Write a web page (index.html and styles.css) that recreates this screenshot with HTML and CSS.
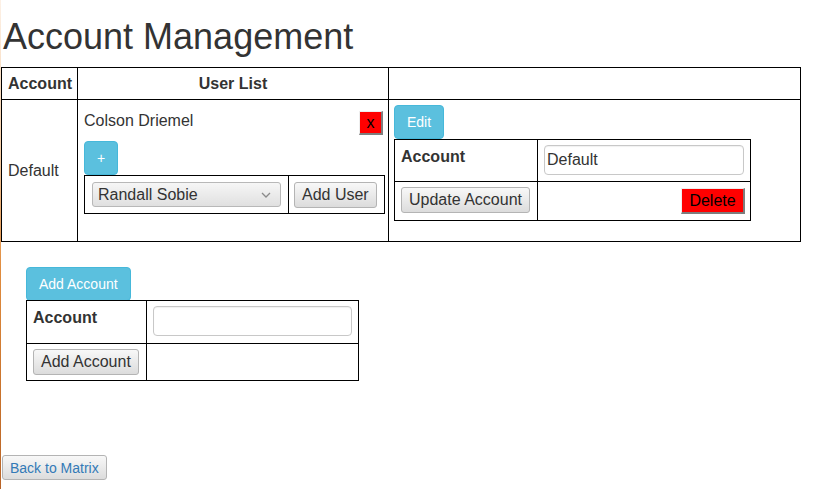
FILE: index.html
```html
<!DOCTYPE html>
<html lang="en">
<head>
<meta charset="utf-8">
<title>Account Management</title>
<link rel="stylesheet" href="styles.css">
</head>
<body>
<div class="page">
  <h1 class="title">Account Management</h1>

  <table class="grid main">
    <colgroup>
      <col class="c-acc">
      <col class="c-users">
      <col class="c-edit">
    </colgroup>
    <thead>
      <tr>
        <th class="h-left">Account</th>
        <th class="h-center">User List</th>
        <th></th>
      </tr>
    </thead>
    <tbody>
      <tr>
        <td class="acc-name">Default</td>
        <td class="top">
          <div class="user">
            <span class="user-name">Colson Driemel</span>
            <button class="btn-red btn-x">x</button>
          </div>
          <button class="btn-info btn-plus">+</button>
          <table class="grid inner adduser">
            <colgroup>
              <col class="c-sel">
              <col class="c-btn">
            </colgroup>
            <tr>
              <td class="sel-cell">
                <div class="select">
                  <span>Randall Sobie</span>
                  <svg class="chev" width="10" height="6" viewBox="0 0 10 6"><path d="M1 1 L5 5 L9 1" fill="none" stroke="#8a8a8a" stroke-width="1.3"/></svg>
                </div>
              </td>
              <td class="btn-cell"><button class="btn-gray">Add User</button></td>
            </tr>
          </table>
        </td>
        <td class="top">
          <button class="btn-info">Edit</button>
          <table class="grid inner form edit-form">
            <colgroup>
              <col class="c-lbl-e">
              <col>
            </colgroup>
            <tr class="r1">
              <th class="lbl">Account</th>
              <td><div class="input">Default</div></td>
            </tr>
            <tr class="r2">
              <td><button class="btn-gray">Update Account</button></td>
              <td class="right"><button class="btn-red btn-del">Delete</button></td>
            </tr>
          </table>
        </td>
      </tr>
    </tbody>
  </table>

  <section class="new-account">
    <button class="btn-info">Add Account</button>
    <table class="grid inner form add-form">
      <colgroup>
        <col class="c-lbl-a">
        <col>
      </colgroup>
      <tr class="r1">
        <th class="lbl">Account</th>
        <td><div class="input"></div></td>
      </tr>
      <tr class="r2">
        <td><button class="btn-gray">Add Account</button></td>
        <td></td>
      </tr>
    </table>
  </section>

  <button class="btn-back">Back to Matrix</button>
</div>
</body>
</html>
```

FILE: styles.css
```css
html {
  min-height: 100%;
  background:
    linear-gradient(to bottom, #fdf1e6 0%, #f6cfa8 30%, #e08c3e 55%, #c9732c 80%, #b86428 100%) left top / 1px 100% no-repeat,
    #ffffff;
}
body {
  margin: 0;
  font-family: "Liberation Sans", Arial, sans-serif;
  font-size: 16px;
  color: #333;
}
.page {
  padding-left: 1px;
}
.title {
  font-size: 36px;
  font-weight: 400;
  line-height: 40px;
  margin: 17px 0 10px;
  padding-left: 2px;
  color: #333;
}

/* tables */
.grid {
  border-collapse: collapse;
  table-layout: fixed;
}
.grid th,
.grid td {
  border: 1px solid #000;
  padding: 0;
}
.main {
  width: 799px;
}
.c-acc { width: 76px; }
.c-users { width: 311px; }
.c-edit { width: 412px; }
.main thead th {
  height: 31px;
  line-height: 20px;
  padding: 0 6px;
  font-weight: 700;
  vertical-align: middle;
}
.h-left { text-align: left; }
.h-center { text-align: center; }
.main td.acc-name {
  padding: 0 6px;
  vertical-align: middle;
  line-height: 20px;
}
.main td.top {
  vertical-align: top;
  padding: 5px 5px 20px 5px;
}

.user {
  display: flex;
  justify-content: space-between;
  align-items: flex-start;
  height: 36px;
}
.user-name {
  line-height: 20px;
  margin-top: 6px;
  margin-left: 1px;
}

/* buttons */
button {
  font-family: "Liberation Sans", Arial, sans-serif;
  margin: 0;
  cursor: pointer;
  white-space: nowrap;
}
.btn-info {
  display: block;
  height: 34px;
  padding: 0 12px;
  font-size: 14px;
  line-height: 20px;
  color: #fff;
  background: #5bc0de;
  border: 1px solid #46b8da;
  border-radius: 4px;
}
.btn-plus {
  width: 34px;
  padding: 0;
  margin-left: 1px;
}
.btn-red {
  background: #ff0000;
  color: #000;
  font-size: 16px;
  border-style: solid;
  border-width: 1px 2px 2px 1px;
  border-color: #eeeeee #7d7d7d #7d7d7d #eeeeee;
  border-radius: 0;
  padding: 0;
  line-height: 20px;
}
.btn-x {
  width: 24px;
  height: 24px;
  margin-top: 6px;
}
.btn-del {
  height: 26px;
  width: 64px;
}
.btn-gray {
  height: 26px;
  padding: 0 7px;
  font-size: 16px;
  color: #333;
  background: linear-gradient(to bottom, #f8f8f8, #dcdcdc);
  border: 1px solid #b4b4b4;
  border-radius: 3px;
  line-height: 22px;
}

/* add-user inner table */
.adduser {
  width: 300px;
  margin-left: 1px;
}
.c-sel { width: 204px; }
.c-btn { width: 96px; }
.adduser td {
  height: 37px;
  vertical-align: middle;
}
.adduser td.sel-cell {
  padding: 0 7px;
}
.adduser td.btn-cell {
  padding: 0 5px;
}
.select {
  display: flex;
  align-items: center;
  justify-content: space-between;
  box-sizing: border-box;
  height: 25px;
  padding: 0 9px 0 5px;
  border: 1px solid #b8b8b8;
  border-radius: 3px;
  background: linear-gradient(to bottom, #f6f6f6, #e0e0e0);
  line-height: 20px;
}

/* form tables */
.form th,
.form td {
  vertical-align: top;
}
.form .lbl {
  text-align: left;
  font-weight: 700;
  padding: 5px 6px 0;
  line-height: 24px;
}
.form .r1 td {
  padding: 5px 6px 0 6px;
}
.form .r2 td {
  padding: 5px 6px 0 6px;
}
.form .r2 td.right {
  text-align: right;
  padding: 6px 5px 0 0;
}
.edit-form .r1 > * { height: 36px; }
.edit-form .r2 > * { height: 32px; }
.add-form .r1 > * { height: 37px; }
.add-form .r2 > * { height: 31px; }

.input {
  height: 30px;
  box-sizing: border-box;
  border: 1px solid #c8c8c8;
  border-radius: 4px;
  box-shadow: inset 0 1px 1px rgba(0, 0, 0, 0.06);
  padding: 0 2px;
  line-height: 28px;
  color: #333;
  background: #fff;
}

.edit-form {
  width: 357px;
}
.c-lbl-e { width: 143px; }

.new-account {
  margin-top: 25px;
  padding-left: 25px;
}
.add-form {
  width: 333px;
  margin-top: -1px;
}
.c-lbl-a { width: 120px; }

.btn-back {
  display: block;
  margin: 74px 0 0 1px;
  height: 25px;
  padding: 0 7px;
  font-size: 14px;
  color: #337ab7;
  background: linear-gradient(to bottom, #f8f8f8, #dcdcdc);
  border: 1px solid #b4b4b4;
  border-radius: 3px;
}
```
